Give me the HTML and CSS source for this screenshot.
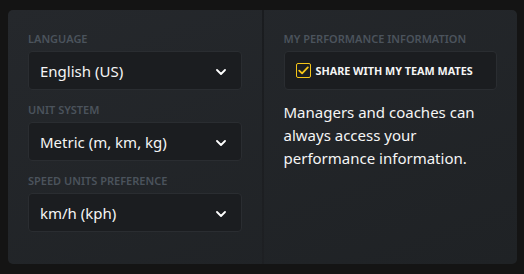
FILE: index.html
```html
<!DOCTYPE html>
<html lang="en">
<head>
  <meta charset="UTF-8" />
  <meta name="viewport" content="width=device-width, initial-scale=1.0" />
  <title>Preferences</title>
  <link rel="stylesheet" href="styles.css">
</head>
<body>
  <div id="panel">
    <section class="column">
      <div class="field">
        <label>Language</label>
        <div class="select">
          <span>English (US)</span>
          <svg class="chevron" width="10" height="6" viewBox="0 0 10 6"><path d="M1 1l4 4 4-4" fill="none" stroke="#fff" stroke-width="1.8" stroke-linecap="round" stroke-linejoin="round"/></svg>
        </div>
      </div>
      <div class="field">
        <label>Unit system</label>
        <div class="select">
          <span>Metric (m, km, kg)</span>
          <svg class="chevron" width="10" height="6" viewBox="0 0 10 6"><path d="M1 1l4 4 4-4" fill="none" stroke="#fff" stroke-width="1.8" stroke-linecap="round" stroke-linejoin="round"/></svg>
        </div>
      </div>
      <div class="field">
        <label>Speed units preference</label>
        <div class="select">
          <span>km/h (kph)</span>
          <svg class="chevron" width="10" height="6" viewBox="0 0 10 6"><path d="M1 1l4 4 4-4" fill="none" stroke="#fff" stroke-width="1.8" stroke-linecap="round" stroke-linejoin="round"/></svg>
        </div>
      </div>
    </section>

    <div class="divider"></div>

    <section class="column">
      <div class="field">
        <label>My performance information</label>
        <div class="checkbox-row">
          <span class="checkbox">
            <svg width="11" height="9" viewBox="0 0 11 9"><path d="M1.2 4.6l2.9 2.8 5.7-6" fill="none" stroke="#f5c518" stroke-width="1.8" stroke-linecap="round" stroke-linejoin="round"/></svg>
          </span>
          <span class="checkbox-label">Share with my team mates</span>
        </div>
      </div>
      <p class="note">Managers and coaches can always access your performance information.</p>
    </section>
  </div>
</body>
</html>
```

FILE: styles.css
```css
/* ======================
   Base
   ====================== */
*, *::before, *::after {
  box-sizing: border-box;
  margin: 0;
  padding: 0;
}
html, body {
  height: 100%;
  font-family: 'Noto Sans', 'Open Sans', sans-serif;
  background-color: #141414;
  color: #f5f5f5;
}
body {
  padding: 10px 7px 10px 8px;
}

/* ======================
   Panel
   ====================== */
#panel {
  display: flex;
  height: 254px;
  border-radius: 5px;
  background: linear-gradient(160deg, #25282c 0%, #1f2225 100%);
  overflow: hidden;
}
.column {
  flex: 1;
  padding: 21px 20px 0;
}
.divider {
  width: 2px;
  background: linear-gradient(180deg, #1a1c1f 0%, #1e2023 100%);
}

/* ======================
   Fields
   ====================== */
.field {
  margin-bottom: 12px;
}
.field label {
  display: block;
  font-size: 11px;
  font-weight: 600;
  line-height: 16px;
  text-transform: uppercase;
  color: #4b535c;
  margin-bottom: 4px;
}
.select {
  display: flex;
  align-items: center;
  justify-content: space-between;
  height: 39px;
  padding: 0 15px 0 11px;
  background-color: #1b1d20;
  border: 1px solid #2a2d31;
  border-radius: 4px;
  font-size: 15px;
}
.chevron {
  margin-top: 2px;
}

/* ======================
   Checkbox
   ====================== */
.checkbox-row {
  display: flex;
  align-items: center;
  gap: 5px;
  height: 39px;
  padding: 0 11px;
  background-color: #1b1d20;
  border: 1px solid #2a2d31;
  border-radius: 4px;
}
.checkbox {
  display: flex;
  align-items: center;
  justify-content: center;
  width: 15px;
  height: 15px;
  border: 1.5px solid #f5c518;
  border-radius: 2px;
}
.checkbox-label {
  font-size: 10.8px;
  font-weight: 700;
  text-transform: uppercase;
}
.note {
  font-size: 15px;
  line-height: 23px;
  margin-top: -1px;
}
```
